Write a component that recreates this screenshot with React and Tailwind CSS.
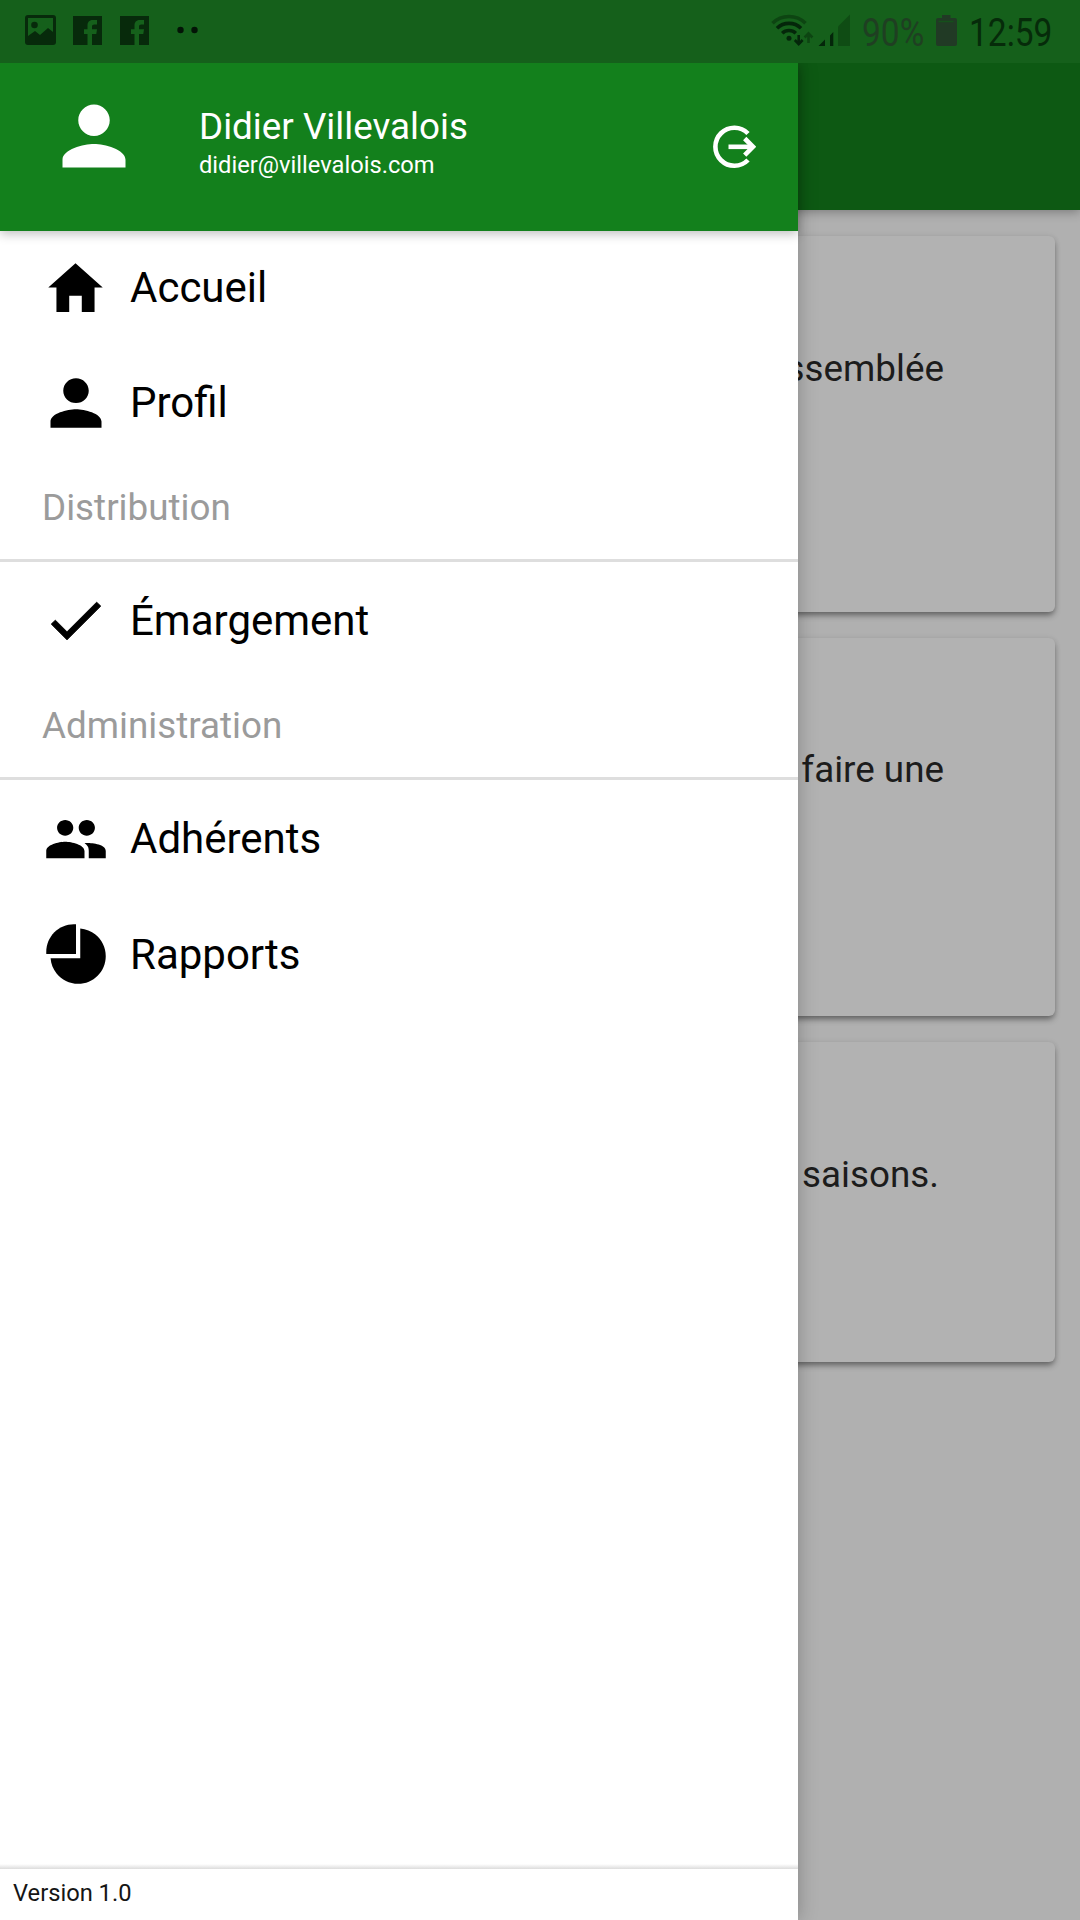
import React from "react";
import { IoMdHome, IoMdPerson, IoMdCheckmark, IoMdPeople, IoMdPie } from "react-icons/io";

function StatusBar() {
  return (
    <div className="relative z-20 flex h-[63px] w-full shrink-0 items-start bg-[#15601b]">
      <svg className="h-[63px] w-[220px]" viewBox="0 0 220 63" fill="#072a0b">
        <path
          fillRule="evenodd"
          d="M28 15h25a3 3 0 0 1 3 3v24a3 3 0 0 1-3 3H28a3 3 0 0 1-3-3V18a3 3 0 0 1 3-3zM28 18v18l7-5 5 4 8-7 5 4V18z"
        />
        <circle cx="34.500" cy="25" r="3.300" />
        <path
          id="fb"
          d="M73 16h29v29H92V34h4.300l.7-4.700h-5v-2.600c0-1.600.7-2.300 2.400-2.300H97V20h-4.200c-3.700 0-5.300 2.300-5.300 5.600v3.700H84V34h3.500v11H73z"
        />
        <use href="#fb" x="47" />
        <circle cx="180.500" cy="30" r="3.200" fill="#031406" />
        <circle cx="194.500" cy="30" r="3.200" fill="#031406" />
      </svg>
      <div className="grow" />
      <svg className="h-[63px] w-[90px]" viewBox="765 0 90 63" fill="none">
        <path d="M772.500 23.200A23.500 23.500 0 0 1 805.500 23.200" stroke="#0d4512" strokeWidth="3.600" />
        <path d="M777 28.300A17 17 0 0 1 801 28.300" stroke="#04260a" strokeWidth="3.600" />
        <path d="M782.200 33.300A9.800 9.800 0 0 1 795.800 33.300" stroke="#04260a" strokeWidth="3.600" />
        <circle cx="789" cy="38.300" r="2.500" fill="#04260a" />
        <path d="M798.700 35v9M794.800 40l3.900 4.100 3.900-4.100" stroke="#04260a" strokeWidth="2.600" />
        <path d="M808.500 43v-9M804.600 37.500l3.900-4.100 3.900 4.100" stroke="#0d4512" strokeWidth="2.600" />
        <path d="M818.500 46l6.500-6.500V46z M830 35.500l3.300-3.500v14H830z" fill="#04260a" />
        <path d="M838 26.500L850 14.500V46H838z" fill="#0f4c14" />
      </svg>
      <div className="w-[77px] pl-[7px]">
        <div className="mt-[10px] origin-left scale-x-[0.87] whitespace-nowrap text-[38.500px] leading-[45px] text-[#1f3f22]">90%</div>
      </div>
      <svg className="h-[63px] w-[31px]" viewBox="932 0 31 63" fill="#213a25">
        <path d="M942 15h8.500v3H955a2 2 0 0 1 2 2v24a2 2 0 0 1-2 2H938a2 2 0 0 1-2-2V20a2 2 0 0 1 2-2h4z" />
        <path d="M938.500 21.500h15" stroke="#15501b" strokeWidth="1.500" />
      </svg>
      <div className="w-[117px] pl-[6px]">
        <div className="mt-[10px] origin-left scale-x-[0.87] whitespace-nowrap text-[38.500px] leading-[45px] text-[#062b0a]">12:59</div>
      </div>
    </div>
  );
}

function LogoutIcon() {
  return (
    <svg className="h-[44px] w-[44px]" viewBox="712 125 44 44" fill="none" stroke="#fff" strokeWidth="4.600">
      <path d="M748 133.500A19 19 0 1 0 748 160" />
      <path d="M728.500 146.800H752" />
      <path d="M744.700 138.500L753 146.800L744.700 155.100" />
    </svg>
  );
}

function MenuItem({ icon, label }) {
  return (
    <li className="flex h-[115.500px] items-center pt-[4px]">
      <span className="mb-px ml-[42px] flex w-[68px] shrink-0 items-center justify-center">{icon}</span>
      <span className="ml-[20px] text-[42px] leading-[50px]">{label}</span>
    </li>
  );
}

function SectionTitle({ children }) {
  return (
    <li className="flex h-[102.500px] items-center border-b-3 border-[#dedede] pb-[2px] pl-[42px] text-[36.800px] text-[#9b9b9b]">
      {children}
    </li>
  );
}

function Drawer() {
  return (
    <aside className="relative z-10 flex w-[798px] shrink-0 flex-col bg-white shadow-[0_0_18px_rgba(0,0,0,0.25)]">
      <header className="relative flex h-[168px] shrink-0 bg-[#13801c] shadow-[0_3px_10px_rgba(0,0,0,0.25)]">
        <IoMdPerson className="mt-[31px] ml-[52px] size-[84px] text-white" />
        <div className="ml-[63px] flex grow flex-col pt-[42px] text-white">
          <span className="text-[36.800px] leading-[44px]">Didier Villevalois</span>
          <span className="text-[23.700px] leading-[32px]">didier@villevalois.com</span>
        </div>
        <button className="mt-[62px] mr-[42px] size-[44px]" aria-label="Déconnexion">
          <LogoutIcon />
        </button>
      </header>
      <ul className="-mt-[3px] grow text-black">
        <MenuItem icon={<IoMdHome preserveAspectRatio="none" className="mr-px h-[65px] w-[67px]" />} label="Accueil" />
        <MenuItem icon={<IoMdPerson preserveAspectRatio="none" className="h-[66px] w-[69px]" />} label="Profil" />
        <SectionTitle>Distribution</SectionTitle>
        <MenuItem icon={<IoMdCheckmark className="mr-px size-[66px] stroke-black stroke-[7]" />} label="Émargement" />
        <SectionTitle>Administration</SectionTitle>
        <MenuItem icon={<IoMdPeople className="size-[68px]" />} label="Adhérents" />
        <MenuItem icon={<IoMdPie className="size-[68px]" preserveAspectRatio="none" />} label="Rapports" />
      </ul>
      <div className="h-[5px] shrink-0 bg-linear-to-b from-white to-[#dcdcdc]" />
      <footer className="h-[51px] shrink-0 pt-[8px] pl-[13px] text-[23.700px] leading-[32px] text-[#151515]">Version 1.0</footer>
    </aside>
  );
}

const cardShadow = "shadow-[0_4px_6px_-1px_rgba(0,0,0,0.45),0_0_6px_rgba(0,0,0,0.06)]";

function Page() {
  return (
    <main className="-ml-[20px] flex grow flex-col bg-[#b0b0b0] text-[36.800px] leading-[48px] text-[#1c1c1c]">
      <div className="h-[147px] shrink-0 bg-[#0d5913] shadow-[0_2px_10px_rgba(0,0,0,0.3)]" />
      <div className="mt-[26px] flex w-[277px] flex-col gap-[26px]">
        <section className={"h-[375.500px] rounded-[6px] bg-[#b2b2b2] pt-[109px] pr-[111px] whitespace-nowrap " + cardShadow}>
          <div className="flex justify-end">ssemblée</div>
        </section>
        <section className={"h-[378px] rounded-[6px] bg-[#b2b2b2] pt-[108px] pr-[111px] whitespace-nowrap " + cardShadow}>
          <div className="flex justify-end">faire une</div>
        </section>
        <section className={"h-[320px] rounded-[6px] bg-[#b2b2b2] pt-[109px] pr-[116px] whitespace-nowrap " + cardShadow}>
          <div className="flex justify-end">saisons.</div>
        </section>
      </div>
    </main>
  );
}

export default function App() {
  return (
    <div className="flex h-[1920px] w-[1080px] flex-col overflow-hidden bg-[#b0b0b0] font-[Roboto,sans-serif]">
      <StatusBar />
      <div className="flex min-h-0 grow">
        <Drawer />
        <Page />
      </div>
    </div>
  );
}
